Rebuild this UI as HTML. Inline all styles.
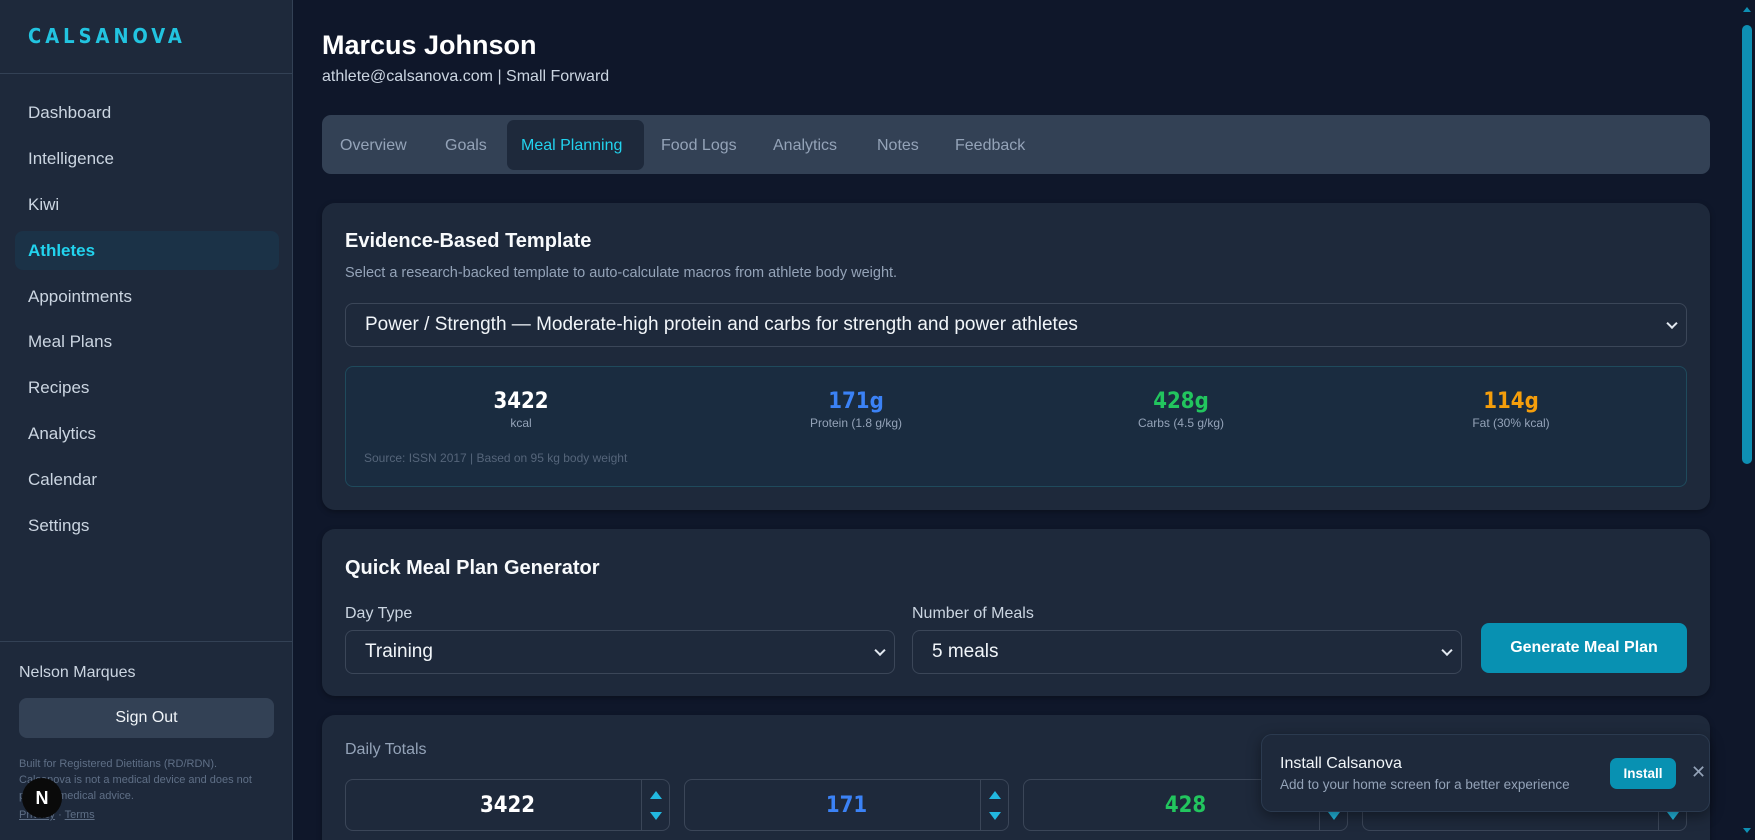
<!DOCTYPE html>
<html><head><meta charset="utf-8"><style>
*{box-sizing:border-box;margin:0;padding:0}
html,body{width:1755px;height:840px;overflow:hidden;background:#0f172a}
body{position:relative;font-family:"Liberation Sans",sans-serif;color:#e2e8f0}
.a{position:absolute}
.sb{left:0;top:0;width:293px;height:840px;background:#1e293b;border-right:1px solid #334155}
.nav{left:28px;font-size:17px;color:#cbd5e1}
.card{background:#1e293b;border-radius:13px;box-shadow:0 2px 6px rgba(0,0,0,.3)}
.sel{background:#1e293b;border:1px solid #3b4658;border-radius:8px;color:#f1f5f9;font-size:19px;padding-left:19px;display:flex;align-items:center}
.chev{position:absolute;right:10px;top:50%;width:8px;height:8px;border-right:2px solid #e2e8f0;border-bottom:2px solid #e2e8f0;transform:translateY(-70%) rotate(45deg)}
.stat{text-align:center;width:336px;top:389px}
.stat b{display:block;font-size:22px;font-family:"DejaVu Sans Condensed","Liberation Sans",sans-serif}
.stat span{font-size:12px;color:#94a3b8}
.tab{top:137px;font-size:16px;color:#94a3b8;white-space:nowrap}
.inp{background:#1e293b;border:1px solid #3b4658;border-radius:8px;height:52px;top:779px;width:325px;font-size:22px;font-weight:bold;text-align:center;line-height:52px;font-family:"DejaVu Sans Condensed",sans-serif}
.spin{position:absolute;right:0;top:0;width:28px;height:50px;border-left:1px solid #3b4658}
.up,.dn{position:absolute;left:8px;width:0;height:0;border-left:6px solid transparent;border-right:6px solid transparent}
.up{top:11px;border-bottom:8px solid #22b8e0}.dn{top:32px;border-top:8px solid #22b8e0}
</style></head><body>
<div class="a sb"></div>
<div class="a" style="left:28px;top:24px;font-size:20px;font-weight:bold;letter-spacing:4px;color:#22c4e0;font-family:'DejaVu Sans Condensed',sans-serif">CALSANOVA</div>
<div class="a" style="left:0;top:73px;width:293px;height:1px;background:#334155"></div>
<div class="a" style="left:15px;top:231px;width:264px;height:39px;background:#1b3247;border-radius:8px"></div>
<div class="a nav" style="top:103px">Dashboard</div>
<div class="a nav" style="top:149px">Intelligence</div>
<div class="a nav" style="top:195px">Kiwi</div>
<div class="a nav" style="top:241px;color:#22d3ee;font-weight:bold">Athletes</div>
<div class="a nav" style="top:287px">Appointments</div>
<div class="a nav" style="top:332px">Meal Plans</div>
<div class="a nav" style="top:378px">Recipes</div>
<div class="a nav" style="top:424px">Analytics</div>
<div class="a nav" style="top:470px">Calendar</div>
<div class="a nav" style="top:516px">Settings</div>
<div class="a" style="left:0;top:641px;width:293px;height:1px;background:#334155"></div>
<div class="a" style="left:19px;top:664px;font-size:16px;color:#cbd5e1">Nelson Marques</div>
<div class="a" style="left:19px;top:698px;width:255px;height:40px;background:#334155;border-radius:8px;text-align:center;line-height:40px;font-size:16px;color:#f1f5f9">Sign Out</div>
<div class="a" style="left:19px;top:756px;width:240px;font-size:11px;line-height:16px;color:#5f6f86">Built for Registered Dietitians (RD/RDN). Calsanova is not a medical device and does not provide medical advice.<br><span style="text-decoration:underline;line-height:22px">Privacy</span> · <span style="text-decoration:underline">Terms</span></div>
<div class="a" style="left:22px;top:778px;width:40px;height:40px;border-radius:50%;background:#0a0a0a;color:#fff;font-size:18px;font-weight:bold;text-align:center;line-height:40px">N</div>

<div class="a" style="left:322px;top:30px;font-size:27px;font-weight:bold;color:#fff">Marcus Johnson</div>
<div class="a" style="left:322px;top:68px;font-size:16px;color:#cbd5e1">athlete@calsanova.com | Small Forward</div>

<div class="a" style="left:322px;top:115px;width:1388px;height:59px;background:#334155;border-radius:9px"></div>
<div class="a" style="left:507px;top:120px;width:137px;height:50px;background:#1e293b;border-radius:7px"></div>
<div class="a tab" style="left:340px">Overview</div>
<div class="a tab" style="left:445px">Goals</div>
<div class="a tab" style="left:521px;color:#22d3ee">Meal Planning</div>
<div class="a tab" style="left:661px">Food Logs</div>
<div class="a tab" style="left:773px">Analytics</div>
<div class="a tab" style="left:877px">Notes</div>
<div class="a tab" style="left:955px">Feedback</div>

<div class="a card" style="left:322px;top:203px;width:1388px;height:307px"></div>
<div class="a" style="left:345px;top:230px;font-size:20px;font-weight:bold;color:#f8fafc">Evidence-Based Template</div>
<div class="a" style="left:345px;top:265px;font-size:14.5px;color:#94a3b8">Select a research-backed template to auto-calculate macros from athlete body weight.</div>
<div class="a sel" style="left:345px;top:303px;width:1342px;height:44px">Power / Strength — Moderate-high protein and carbs for strength and power athletes<i class="chev"></i></div>
<div class="a" style="left:345px;top:366px;width:1342px;height:121px;background:#1a2c40;border:1px solid #1f4a5c;border-radius:8px"></div>
<div class="a stat" style="left:353px"><b style="color:#fff">3422</b><span>kcal</span></div>
<div class="a stat" style="left:688px"><b style="color:#3b82f6">171g</b><span>Protein (1.8 g/kg)</span></div>
<div class="a stat" style="left:1013px"><b style="color:#22c55e">428g</b><span>Carbs (4.5 g/kg)</span></div>
<div class="a stat" style="left:1343px"><b style="color:#f59e0b">114g</b><span>Fat (30% kcal)</span></div>
<div class="a" style="left:364px;top:451px;font-size:12px;color:#55657a">Source: ISSN 2017 | Based on 95 kg body weight</div>

<div class="a card" style="left:322px;top:529px;width:1388px;height:167px"></div>
<div class="a" style="left:345px;top:557px;font-size:20px;font-weight:bold;color:#f8fafc">Quick Meal Plan Generator</div>
<div class="a" style="left:345px;top:605px;font-size:16px;color:#cbd5e1">Day Type</div>
<div class="a" style="left:912px;top:605px;font-size:16px;color:#cbd5e1">Number of Meals</div>
<div class="a sel" style="left:345px;top:630px;width:550px;height:44px">Training<i class="chev"></i></div>
<div class="a sel" style="left:912px;top:630px;width:550px;height:44px">5 meals<i class="chev"></i></div>
<div class="a" style="left:1481px;top:623px;width:206px;height:50px;background:#0891b2;border-radius:8px;color:#fff;font-size:16px;font-weight:bold;text-align:center;line-height:50px">Generate Meal Plan</div>

<div class="a card" style="left:322px;top:715px;width:1388px;height:146px"></div>
<div class="a" style="left:345px;top:741px;font-size:16px;color:#94a3b8">Daily Totals</div>
<div class="a inp" style="left:345px;color:#fff">3422<div class="spin"><i class="up"></i><i class="dn"></i></div></div>
<div class="a inp" style="left:684px;color:#3b82f6">171<div class="spin"><i class="up"></i><i class="dn"></i></div></div>
<div class="a inp" style="left:1023px;color:#22c55e">428<div class="spin"><i class="up"></i><i class="dn"></i></div></div>
<div class="a inp" style="left:1362px;color:#f59e0b">114<div class="spin"><i class="up"></i><i class="dn"></i></div></div>

<div class="a" style="left:1261px;top:734px;width:449px;height:78px;background:#1e293b;border:1px solid #2b3a4f;border-radius:11px;box-shadow:0 4px 14px rgba(0,0,0,.4)"></div>
<div class="a" style="left:1280px;top:755px;font-size:16px;color:#f1f5f9">Install Calsanova</div>
<div class="a" style="left:1280px;top:777px;font-size:13.5px;color:#94a3b8">Add to your home screen for a better experience</div>
<div class="a" style="left:1610px;top:758px;width:66px;height:31px;background:#0891b2;border-radius:7px;color:#fff;font-size:13.5px;font-weight:bold;text-align:center;line-height:31px">Install</div>
<div class="a" style="left:1691px;top:762px;font-size:18px;color:#94a3b8">✕</div>

<div class="a" style="left:1742px;top:25px;width:10px;height:439px;background:#0e8fb3;border-radius:5px"></div>
<div class="a" style="left:1743px;top:7px;width:0;height:0;border-left:4px solid transparent;border-right:4px solid transparent;border-bottom:5px solid #0e8fb3"></div>
<div class="a" style="left:1743px;top:828px;width:0;height:0;border-left:4px solid transparent;border-right:4px solid transparent;border-top:5px solid #0e8fb3"></div>
</body></html>
